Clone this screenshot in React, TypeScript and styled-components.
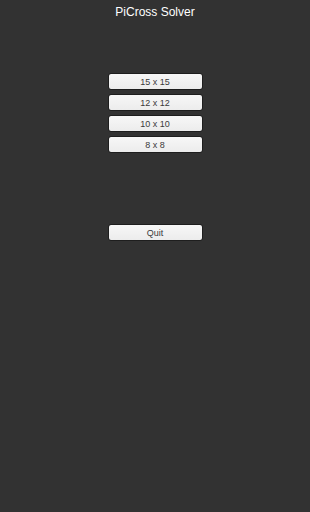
import React, {FC} from "react";
import styled, {createGlobalStyle} from "styled-components";

const Global = createGlobalStyle`
html, body {
  margin: 0;
  padding: 0;
  background: #323232;
}
body {
  font-family: "Liberation Sans", Arial, sans-serif;
}
`;

const sizes = ["15 x 15", "12 x 12", "10 x 10", "8 x 8"];

const App: FC = () => <>
  <Global/>
  <Screen>
    <Title>PiCross Solver</Title>
    <Menu>
      {sizes.map(s => <MenuButton key={s}>{s}</MenuButton>)}
    </Menu>
    <QuitButton>Quit</QuitButton>
  </Screen>
</>;
export default App;

const Screen = styled.div`
width: 310px;
height: 512px;
background: #323232;
display: flex;
flex-direction: column;
align-items: center;
`;
const Title = styled.div`
color: #fff;
font-size: 12px;
line-height: 14px;
margin-top: 5px;
`;
const Menu = styled.div`
display: flex;
flex-direction: column;
gap: 4px;
margin-top: 54px;
`;
const MenuButton = styled.div`
box-sizing: border-box;
width: 95px;
height: 17px;
border: 1px solid #1e1e1e;
border-radius: 3px;
background: linear-gradient(#f7f7f7, #ececec);
color: #3a3a3a;
font-size: 9px;
display: flex;
align-items: center;
justify-content: center;
`;
const QuitButton = styled(MenuButton)`
margin-top: 71px;
`;
